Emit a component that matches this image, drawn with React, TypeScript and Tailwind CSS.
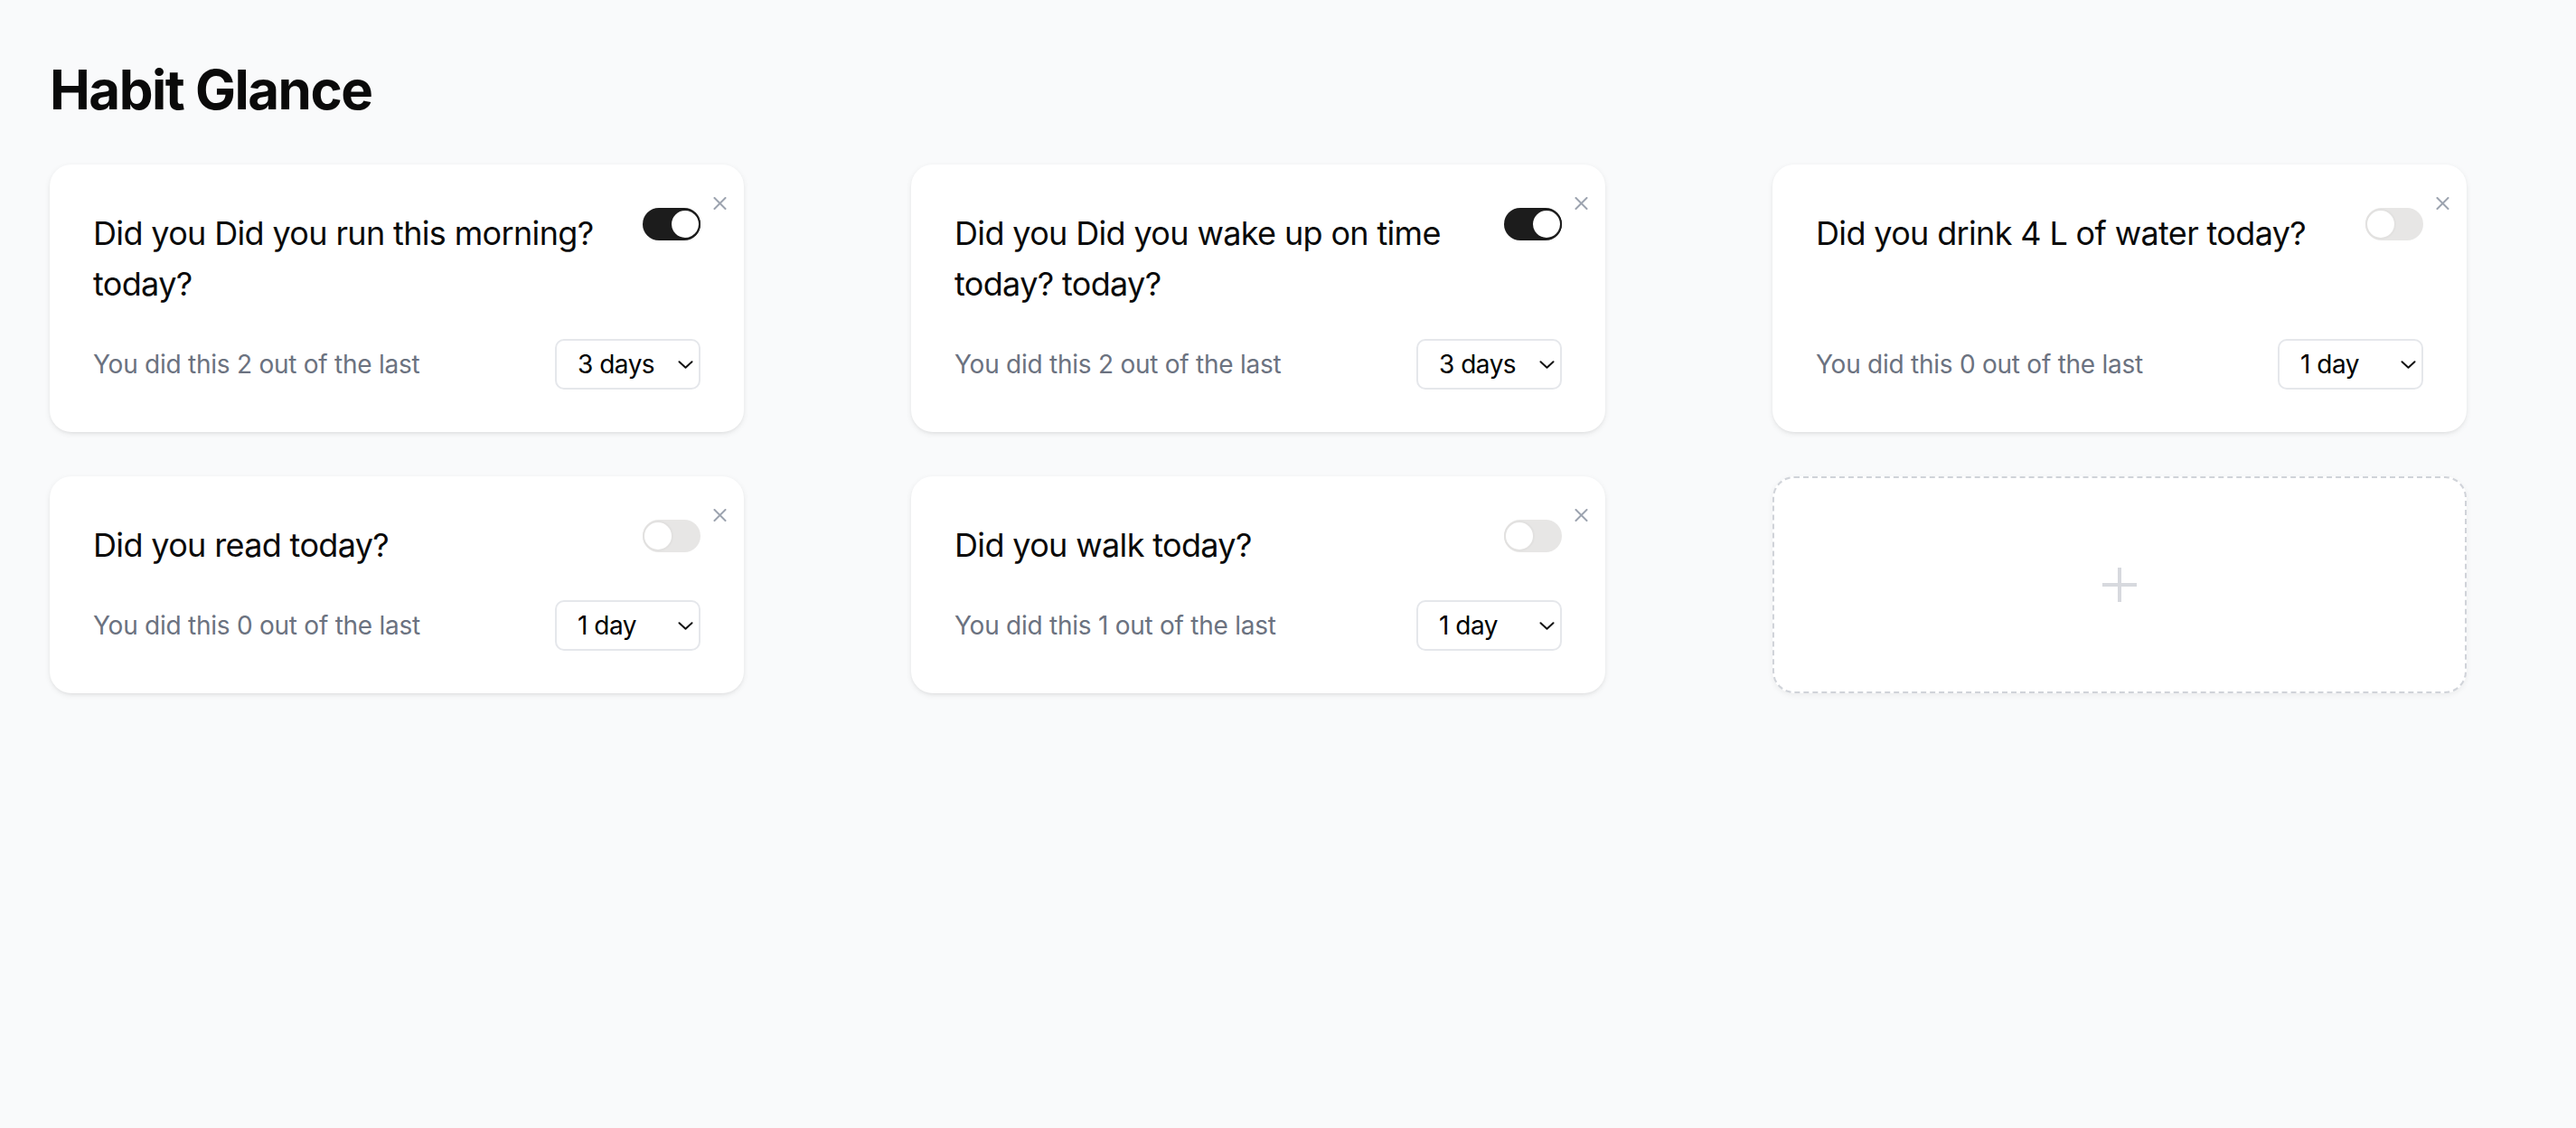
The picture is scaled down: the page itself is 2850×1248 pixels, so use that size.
import React from "react";

type Habit = {
  title: string;
  on: boolean;
  count: number;
  period: string;
};

const habits: Habit[] = [
  { title: "Did you Did you run this morning? today?", on: true, count: 2, period: "3 days" },
  { title: "Did you Did you wake up on time today? today?", on: true, count: 2, period: "3 days" },
  { title: "Did you drink 4 L of water today?", on: false, count: 0, period: "1 day" },
  { title: "Did you read today?", on: false, count: 0, period: "1 day" },
  { title: "Did you walk today?", on: false, count: 1, period: "1 day" },
];

const periods = ["1 day", "2 days", "3 days", "4 days", "5 days", "6 days", "7 days"];

function Toggle({ on }: { on: boolean }) {
  return on ? (
    <div className="relative h-[36px] w-[64px] shrink-0 rounded-full bg-[#1c1c1c]">
      <div className="absolute right-0 top-[1px] h-[34px] w-[34px] rounded-full border-2 border-[#1c1c1c] bg-white" />
    </div>
  ) : (
    <div className="relative h-[36px] w-[64px] shrink-0 rounded-full bg-[#e7e6e5]">
      <div className="absolute left-0 top-[1px] h-[34px] w-[34px] rounded-full border-2 border-[#e2e1e0] bg-white" />
    </div>
  );
}

function Card({ h }: { h: Habit }) {
  return (
    <div className="relative flex flex-col justify-between rounded-[24px] bg-white p-[48px] shadow-[0_2px_6px_0_rgba(0,0,0,0.08),0_2px_4px_-2px_rgba(0,0,0,0.08)]">
      <svg
        className="absolute right-[19px] top-[36px] h-[14px] w-[15px]"
        viewBox="0 0 15 14"
        fill="none"
        stroke="#9ca3af"
        strokeWidth="2"
        strokeLinecap="round"
      >
        <line x1="1.5" y1="1" x2="13.5" y2="13" />
        <line x1="13.5" y1="1" x2="1.5" y2="13" />
      </svg>
      <div className="flex items-start justify-between gap-[32px]">
        <p className="text-[36px] leading-[56px] tracking-[-0.65px] text-[#0a0a0a]">{h.title}</p>
        <Toggle on={h.on} />
      </div>
      <div className="mt-[32px] flex items-center justify-between">
        <span className="translate-y-[1px] text-[28px] leading-[40px] tracking-[-0.25px] text-[#6b7280]">
          You did this {h.count} out of the last
        </span>
        <div className="relative translate-y-[1px]">
          <select
            defaultValue={h.period}
            className="h-[56px] w-[161px] appearance-none rounded-[10px] border-2 border-[#e5e7eb] bg-white pl-[23px] text-[28px] tracking-[-0.5px] text-black outline-none"
          >
            {periods.map((p) => (
              <option key={p} value={p}>
                {p}
              </option>
            ))}
          </select>
          <svg
            className="pointer-events-none absolute right-[8px] top-[24px] h-[9px] w-[17px]"
            viewBox="0 0 17 9"
            fill="none"
            stroke="#111"
            strokeWidth="2"
            strokeLinecap="round"
            strokeLinejoin="round"
          >
            <polyline points="1.5,1.2 8.5,7.8 15.5,1.2" />
          </svg>
        </div>
      </div>
    </div>
  );
}

export default function App() {
  return (
    <div className="min-h-screen bg-[#f9fafb] pl-[55px] pt-[63px] font-['Inter','Noto_Sans',sans-serif]">
      <h1 className="text-[60px] font-bold leading-[72px] tracking-[-1.5px] text-[#0a0a0a]">Habit Glance</h1>
      <div className="mt-[47px] grid grid-cols-[repeat(3,768px)] gap-x-[185px] gap-y-[49px]">
        {habits.map((h, i) => (
          <Card key={i} h={h} />
        ))}
        <div className="flex items-center justify-center rounded-[24px] border-2 border-dashed border-[#d0d3d9] bg-white shadow-[0_2px_6px_0_rgba(0,0,0,0.06)]">
          <svg width="38" height="38" viewBox="0 0 38 38" stroke="#d7d9de" strokeWidth="4">
            <line x1="19" y1="0" x2="19" y2="38" />
            <line x1="0" y1="19" x2="38" y2="19" />
          </svg>
        </div>
      </div>
    </div>
  );
}
